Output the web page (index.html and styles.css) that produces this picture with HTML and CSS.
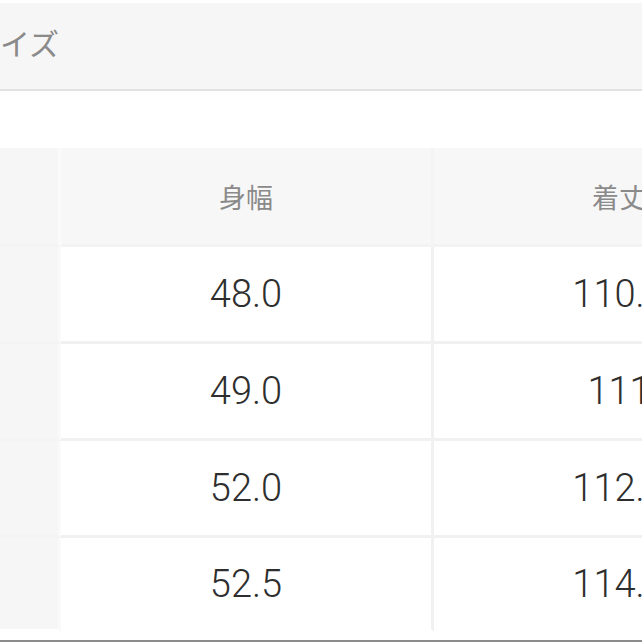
FILE: index.html
```html
<!DOCTYPE html>
<html lang="ja">
<head>
<meta charset="utf-8">
<title>サイズ</title>
<link rel="stylesheet" href="styles.css">
</head>
<body>
<div class="page">
  <div class="section-head"><span class="section-title">サイズ</span></div>
  <div class="spacer"></div>
  <div class="size-table">
    <div class="cell head label"></div>
    <div class="cell head">身幅</div>
    <div class="cell head">着丈</div>

    <div class="cell label">S</div>
    <div class="cell val">48.0</div>
    <div class="cell val">110.0</div>

    <div class="cell label">M</div>
    <div class="cell val">49.0</div>
    <div class="cell val">111</div>

    <div class="cell label">L</div>
    <div class="cell val">52.0</div>
    <div class="cell val">112.0</div>

    <div class="cell label">XL</div>
    <div class="cell val">52.5</div>
    <div class="cell val">114.0</div>
  </div>
  <div class="next-section"></div>
</div>
</body>
</html>
```

FILE: styles.css
```css
html, body {
  margin: 0;
  padding: 0;
  background: #ffffff;
  overflow: hidden;
}

.page {
  width: 642px;
  height: 642px;
  overflow: hidden;
  padding-top: 3px;
  box-sizing: border-box;
  font-family: "Noto Sans CJK JP", Roboto, sans-serif;
}

.section-head {
  height: 86px;
  background: #f6f6f6;
  border-bottom: 2px solid #e2e2e2;
  display: flex;
  align-items: center;
}

.section-title {
  font-size: 30px;
  color: #8a8a8a;
  margin-left: -30px;
  white-space: nowrap;
  line-height: 1;
  padding-bottom: 8px;
}

.spacer {
  height: 57px;
}

.size-table {
  display: grid;
  grid-template-columns: 181px 373px 373px;
  grid-template-rows: 99px 97px 97px 97px 94px;
  margin-left: -120px;
  width: max-content;
}

.cell {
  display: flex;
  align-items: center;
  justify-content: center;
  background: #ffffff;
  white-space: nowrap;
  border-right: 3px solid #f1f1f1;
  border-bottom: 3px solid #f1f1f1;
}

.cell.head {
  background: #f7f7f7;
  border-right-color: #f4f4f4;
  border-bottom-color: #f3f3f3;
  color: #8a8a8a;
  font-size: 27px;
  font-family: "Noto Sans CJK JP", sans-serif;
}

.cell.label {
  background: #f6f6f6;
  border-right-color: #fafafa;
  border-bottom-color: #f4f4f4;
  color: #555555;
  font-size: 30px;
}

.cell.val {
  color: #2e2e2e;
  font-family: Roboto, "Noto Sans", sans-serif;
  font-weight: 300;
  font-size: 38px;
}

.size-table .cell:nth-last-child(-n+3) {
  border-bottom-color: #ffffff;
}

.next-section {
  margin-top: 8px;
  border-top: 3px solid #8c8c8c;
}
```
